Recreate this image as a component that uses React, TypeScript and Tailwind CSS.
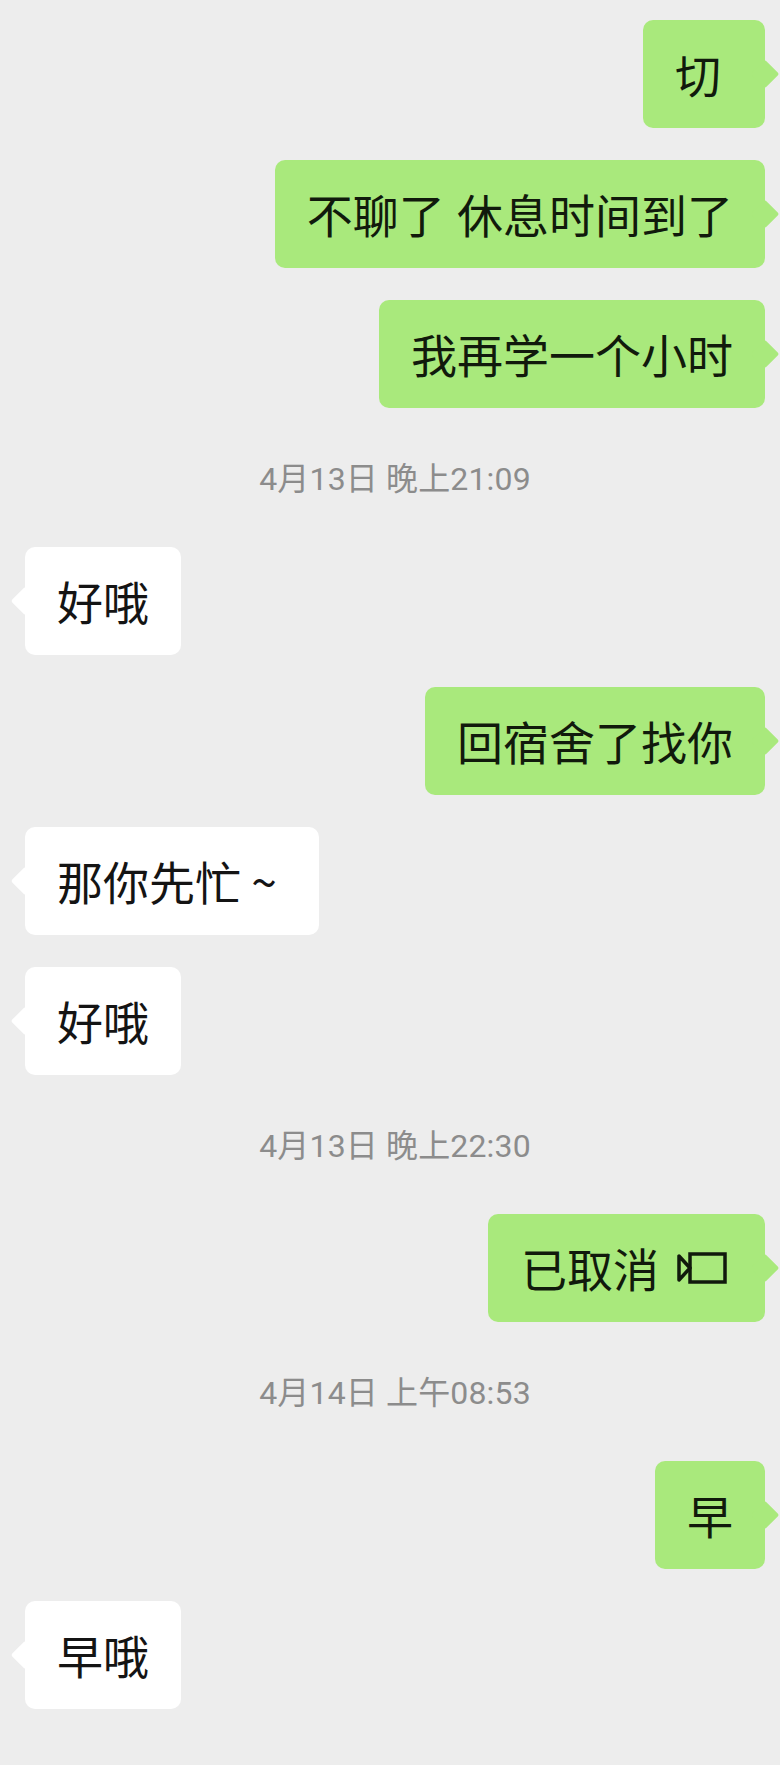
const fontStack = "font-['Noto_Sans_CJK_SC','Noto_Sans',sans-serif]";

function Tail({ side, color }: { side: 'left' | 'right'; color: string }) {
  return (
    <span
      className={`absolute top-1/2 h-5 w-5 -translate-y-1/2 rotate-45 rounded-[2px] ${color} ${
        side === 'right' ? '-right-[10px]' : '-left-[10px]'
      }`}
    />
  );
}

function Sent({ children, className = '' }: { children: React.ReactNode; className?: string }) {
  return (
    <div className={`relative mr-[15px] flex h-[108px] items-center self-end rounded-[10px] bg-[#a9e97c] pb-[2px] pl-8 pr-8 text-[46px] leading-none whitespace-pre text-[#111a0c] ${className}`}>
      {children}
      <Tail side="right" color="bg-[#a9e97c]" />
    </div>
  );
}

function Received({ children, className = '' }: { children: React.ReactNode; className?: string }) {
  return (
    <div className={`relative ml-[25px] flex h-[108px] items-center self-start rounded-[10px] bg-white pb-[2px] pl-8 pr-8 text-[46px] leading-none whitespace-pre text-[#141414] ${className}`}>
      {children}
      <Tail side="left" color="bg-white" />
    </div>
  );
}

function Time({ children }: { children: React.ReactNode }) {
  return (
    <div className="mt-[49px] mb-[46px] flex h-11 items-center justify-center pl-[10px] font-['Roboto','Noto_Sans_CJK_SC',sans-serif] text-[32px] leading-none tracking-[0.15px] text-[#8c8c8c]">
      {children}
    </div>
  );
}

function VideoIcon() {
  return (
    <svg width="50" height="32" viewBox="0 0 50 32" fill="none" stroke="#111a0c" strokeWidth="3.5" className="ml-[18px] mt-[2px] shrink-0">
      <rect x="13" y="2" width="35" height="28" />
      <path d="M2 4 V28 L13 16 Z" strokeLinejoin="round" />
    </svg>
  );
}

export default function App() {
  return (
    <div className={`flex h-[1765px] w-[780px] flex-col overflow-hidden bg-[#ededed] pt-5 ${fontStack}`}>
      <Sent className="w-[122px] !pl-[32px] !pr-0">切</Sent>
      <Sent className="mt-8 [word-spacing:2px]">不聊了 休息时间到了</Sent>
      <Sent className="mt-8">我再学一个小时</Sent>

      <Time>4月13日 晚上21:09</Time>

      <Received>好哦</Received>
      <Sent className="mt-8">回宿舍了找你</Sent>
      <Received className="mt-8 !pr-[42px]">那你先忙 ~</Received>
      <Received className="mt-8">好哦</Received>

      <Time>4月13日 晚上22:30</Time>

      <Sent className="!pl-[33px] !pr-[38px]">
        已取消
        <VideoIcon />
      </Sent>

      <Time>4月14日 上午08:53</Time>

      <Sent>早</Sent>
      <Received className="mt-8">早哦</Received>
    </div>
  );
}
